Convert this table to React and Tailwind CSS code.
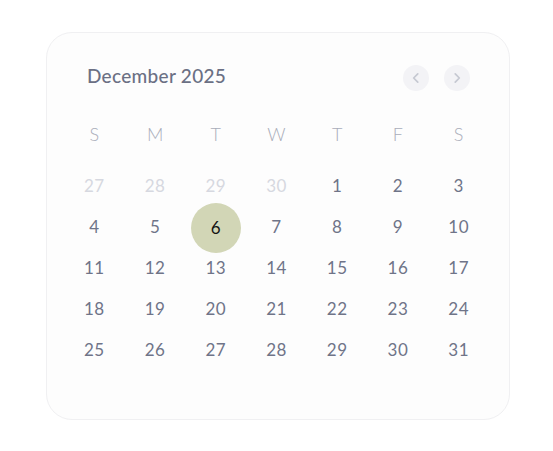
import React from 'react';

const weekdays = ['S', 'M', 'T', 'W', 'T', 'F', 'S'];

const buildDays = () => {
    const days = [27, 28, 29, 30].map((d) => ({ d, muted: true }));
    for (let i = 1; i <= 31; i++) days.push({ d: i, muted: false });
    return days;
};

const Chevron = ({ dir }) => (
    <svg width="14" height="14" viewBox="0 0 24 24" fill="none" stroke="#c6c9d2" strokeWidth="3" strokeLinecap="round" strokeLinejoin="round">
        {dir === 'left' ? <path d="M15 5l-7 7 7 7" /> : <path d="M9 5l7 7-7 7" />}
    </svg>
);

export default function App() {
    const days = buildDays();

    return (
        <div className="w-[553px] h-[451px] bg-white pt-[32px] pl-[46px]" style={{ fontFamily: 'Lato, "Open Sans", sans-serif' }}>
            <div className="w-[464px] h-[388px] rounded-[26px] bg-[#fdfdfd] border border-[#f0f0f2] pt-[32px] pl-[17px] pr-[20px]">
                <div className="flex items-center justify-between pl-[23px] pr-[19px] h-[26px]">
                    <span className="text-[19px] font-medium tracking-[0.3px] text-[#6b7084] -mt-[4px]">December 2025</span>
                    <div className="flex gap-[15px]">
                        <button className="w-[26px] h-[26px] rounded-full bg-[#f3f3f6] flex items-center justify-center">
                            <Chevron dir="left" />
                        </button>
                        <button className="w-[26px] h-[26px] rounded-full bg-[#f3f3f6] flex items-center justify-center">
                            <Chevron dir="right" />
                        </button>
                    </div>
                </div>

                <div className="grid grid-cols-7 mt-[30px] h-[24px] items-center">
                    {weekdays.map((w, i) => (
                        <span key={i} className="text-center text-[18px] font-light text-[#a9adba]">{w}</span>
                    ))}
                </div>

                <div className="grid grid-cols-7 mt-[20px] auto-rows-[41px]">
                    {days.map((item, i) => (
                        <div key={i} className="flex items-center justify-center">
                            {item.d === 6 && !item.muted ? (
                                <span className="w-[50px] h-[50px] mt-[3px] rounded-full bg-[#d2d6b6] flex items-center justify-center text-[17px] text-[#141414]">
                                    6
                                </span>
                            ) : (
                                <span className={`text-[17px] tracking-[0.5px] ${item.muted ? 'text-[#d6d8e0]' : 'text-[#6f7488]'}`}>
                                    {item.d}
                                </span>
                            )}
                        </div>
                    ))}
                </div>
            </div>
        </div>
    );
}
